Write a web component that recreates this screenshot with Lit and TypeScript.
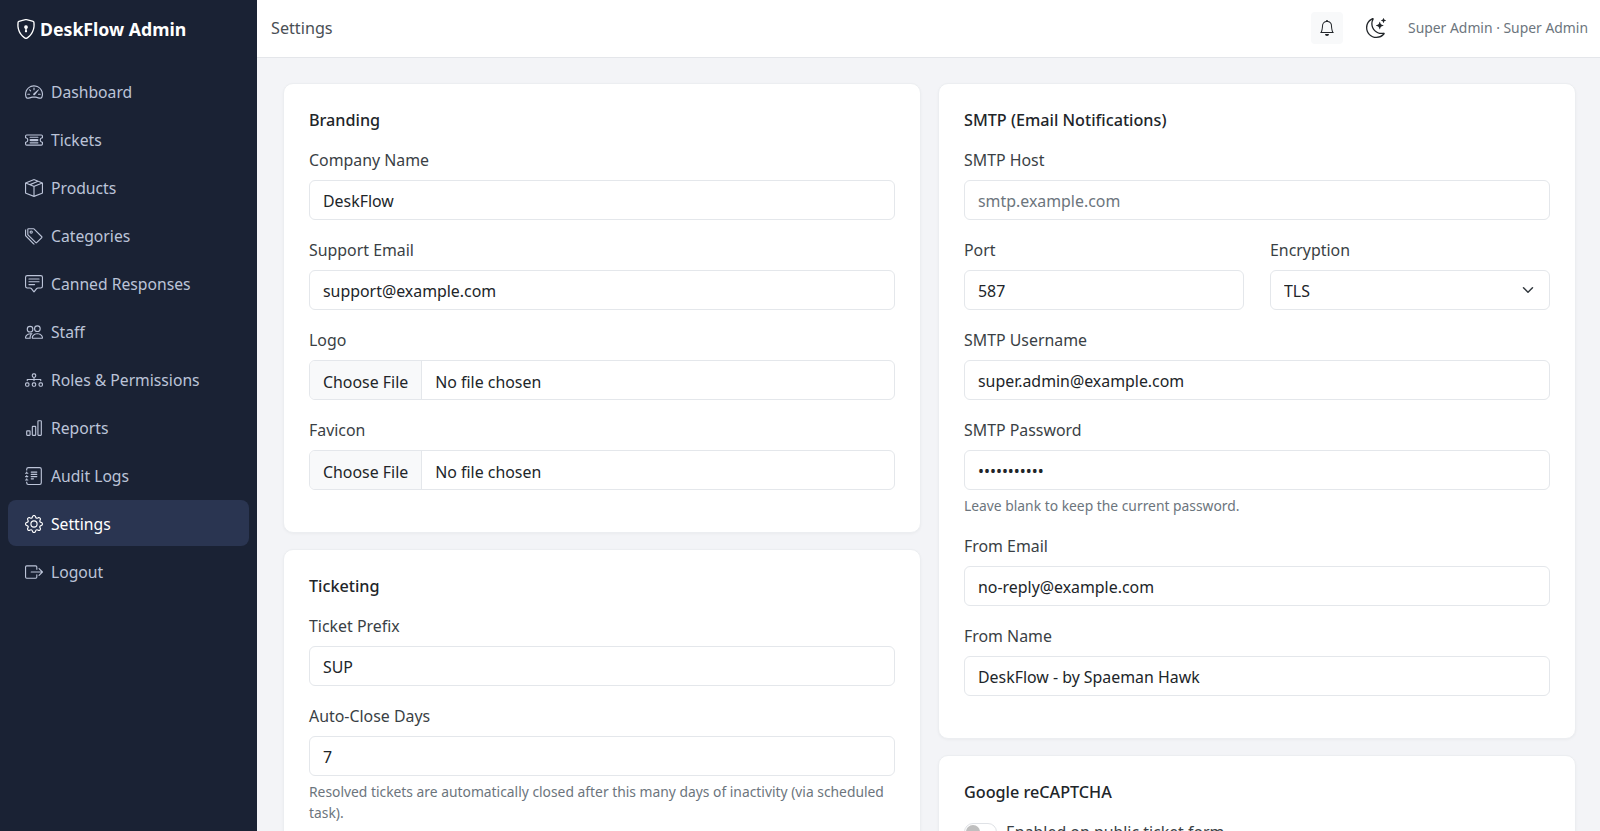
import { LitElement, html, css, svg } from 'lit';
import { customElement } from 'lit/decorators.js';

const icons: Record<string, unknown> = {
  shield: svg`<path d="M5.338 1.59a61.44 61.44 0 0 0-2.837.856.481.481 0 0 0-.328.39c-.554 4.157.726 7.19 2.253 9.188a10.725 10.725 0 0 0 2.287 2.233c.346.244.652.42.893.533.12.057.218.095.293.118a.55.55 0 0 0 .101.025.615.615 0 0 0 .1-.025c.076-.023.174-.061.294-.118.24-.113.547-.29.893-.533a10.726 10.726 0 0 0 2.287-2.233c1.527-1.997 2.807-5.031 2.253-9.188a.48.48 0 0 0-.328-.39c-.651-.213-1.75-.56-2.837-.855C9.552 1.29 8.531 1.067 8 1.067c-.53 0-1.552.223-2.662.524zM5.072.56C6.157.265 7.31 0 8 0s1.843.265 2.928.56c1.11.3 2.229.655 2.887.87a1.54 1.54 0 0 1 1.044 1.262c.596 4.477-.787 7.795-2.465 9.99a11.775 11.775 0 0 1-2.517 2.453 7.159 7.159 0 0 1-1.048.625c-.28.132-.581.24-.829.24s-.548-.108-.829-.24a7.158 7.158 0 0 1-1.048-.625 11.777 11.777 0 0 1-2.517-2.453C1.928 10.487.545 7.169 1.141 2.692A1.54 1.54 0 0 1 2.185 1.43 62.456 62.456 0 0 1 5.072.56z"/><path d="M9.5 6.5a1.5 1.5 0 0 1-1 1.415l.385 1.99a.5.5 0 0 1-.491.595h-.788a.5.5 0 0 1-.49-.595l.384-1.99a1.5 1.5 0 1 1 2-1.415z"/>`,
  speedometer: svg`<path d="M8 4a.5.5 0 0 1 .5.5V6a.5.5 0 0 1-1 0V4.5A.5.5 0 0 1 8 4zM3.732 5.732a.5.5 0 0 1 .707 0l.915.914a.5.5 0 1 1-.708.708l-.914-.915a.5.5 0 0 1 0-.707zM2 10a.5.5 0 0 1 .5-.5h1.586a.5.5 0 0 1 0 1H2.5A.5.5 0 0 1 2 10zm9.5 0a.5.5 0 0 1 .5-.5h1.5a.5.5 0 0 1 0 1H12a.5.5 0 0 1-.5-.5zm.754-4.246a.389.389 0 0 0-.527-.02L7.547 9.31a.91.91 0 1 0 1.302 1.258l3.434-4.297a.389.389 0 0 0-.029-.518z"/><path d="M0 10a8 8 0 1 1 15.547 2.661c-.442 1.253-1.845 1.602-2.932 1.25C11.309 13.488 9.475 13 8 13c-1.474 0-3.31.488-4.615.911-1.087.352-2.49.003-2.932-1.25A7.988 7.988 0 0 1 0 10zm8-7a7 7 0 0 0-6.603 9.329c.203.575.923.876 1.68.63C4.397 12.533 6.358 12 8 12s3.604.532 4.923.96c.757.245 1.477-.056 1.68-.631A7 7 0 0 0 8 3z"/>`,
  ticket: svg`<path d="M4 5.5a.5.5 0 0 1 .5-.5h7a.5.5 0 0 1 0 1h-7a.5.5 0 0 1-.5-.5Zm0 5a.5.5 0 0 1 .5-.5h7a.5.5 0 0 1 0 1h-7a.5.5 0 0 1-.5-.5ZM5 7a1 1 0 0 0 0 2h6a1 1 0 1 0 0-2H5Z"/><path d="M0 4.5A1.5 1.5 0 0 1 1.5 3h13A1.5 1.5 0 0 1 16 4.5V6a.5.5 0 0 1-.5.5 1.5 1.5 0 0 0 0 3 .5.5 0 0 1 .5.5v1.5a1.5 1.5 0 0 1-1.5 1.5h-13A1.5 1.5 0 0 1 0 11.5V10a.5.5 0 0 1 .5-.5 1.5 1.5 0 1 0 0-3A.5.5 0 0 1 0 6V4.5ZM1.5 4a.5.5 0 0 0-.5.5v1.05a2.5 2.5 0 0 1 0 4.9v1.05a.5.5 0 0 0 .5.5h13a.5.5 0 0 0 .5-.5v-1.05a2.5 2.5 0 0 1 0-4.9V4.5a.5.5 0 0 0-.5-.5h-13Z"/>`,
  box: svg`<path d="M8.186 1.113a.5.5 0 0 0-.372 0L1.846 3.5l2.404.961L10.404 2l-2.218-.887zm3.564 1.426L5.596 5 8 5.961 14.154 3.5l-2.404-.961zm3.25 1.7-6.5 2.6v7.922l6.5-2.6V4.24zM7.5 14.762V6.838L1 4.239v7.925l6.5 2.6zM7.443.184a1.5 1.5 0 0 1 1.114 0l7.129 2.852A.5.5 0 0 1 16 3.5v8.662a1 1 0 0 1-.629.928l-7.185 2.874a.5.5 0 0 1-.372 0L.63 13.09a1 1 0 0 1-.63-.928V3.5a.5.5 0 0 1 .314-.464L7.443.184z"/>`,
  tags: svg`<path d="M3 2v4.586l7 7L14.586 9l-7-7H3zM2 2a1 1 0 0 1 1-1h4.586a1 1 0 0 1 .707.293l7 7a1 1 0 0 1 0 1.414l-4.586 4.586a1 1 0 0 1-1.414 0l-7-7A1 1 0 0 1 2 6.586V2z"/><path d="M5.5 5a.5.5 0 1 1 0-1 .5.5 0 0 1 0 1zm0 1a1.5 1.5 0 1 0 0-3 1.5 1.5 0 0 0 0 3zM1 7.086a1 1 0 0 0 .293.707L8.75 15.25l-.043.043a1 1 0 0 1-1.414 0l-7-7A1 1 0 0 1 0 7.586V3a1 1 0 0 1 1-1v5.086z"/>`,
  chat: svg`<path d="M14 1a1 1 0 0 1 1 1v8a1 1 0 0 1-1 1h-2.5a2 2 0 0 0-1.6.8L8 14.333 6.1 11.8a2 2 0 0 0-1.6-.8H2a1 1 0 0 1-1-1V2a1 1 0 0 1 1-1h12zM2 0a2 2 0 0 0-2 2v8a2 2 0 0 0 2 2h2.5a1 1 0 0 1 .8.4l1.9 2.533a1 1 0 0 0 1.6 0l1.9-2.533a1 1 0 0 1 .8-.4H14a2 2 0 0 0 2-2V2a2 2 0 0 0-2-2H2z"/><path d="M3 3.5a.5.5 0 0 1 .5-.5h9a.5.5 0 0 1 0 1h-9a.5.5 0 0 1-.5-.5zM3 6a.5.5 0 0 1 .5-.5h9a.5.5 0 0 1 0 1h-9A.5.5 0 0 1 3 6zm0 2.5a.5.5 0 0 1 .5-.5h5a.5.5 0 0 1 0 1h-5a.5.5 0 0 1-.5-.5z"/>`,
  people: svg`<path d="M15 14s1 0 1-1-1-4-5-4-5 3-5 4 1 1 1 1h8Zm-7.978-1A.261.261 0 0 1 7 12.996c.001-.264.167-1.03.76-1.72C8.312 10.629 9.282 10 11 10c1.717 0 2.687.63 3.24 1.276.593.69.758 1.457.76 1.72l-.008.002a.274.274 0 0 1-.014.002H7.022ZM11 7a2 2 0 1 0 0-4 2 2 0 0 0 0 4Zm3-2a3 3 0 1 1-6 0 3 3 0 0 1 6 0ZM6.936 9.28a5.88 5.88 0 0 0-1.23-.247A7.35 7.35 0 0 0 5 9c-4 0-5 3-5 4 0 .667.333 1 1 1h4.216A2.238 2.238 0 0 1 5 13c0-1.01.377-2.042 1.09-2.904.243-.294.526-.569.846-.816ZM4.92 10A5.493 5.493 0 0 0 4 13H1c0-.26.164-1.03.76-1.724.545-.636 1.492-1.256 3.16-1.275ZM1.5 5.5a3 3 0 1 1 6 0 3 3 0 0 1-6 0Zm3-2a2 2 0 1 0 0 4 2 2 0 0 0 0-4Z"/>`,
  diagram: svg`<path fill-rule="evenodd" d="M6 3.5A1.5 1.5 0 0 1 7.5 2h1A1.5 1.5 0 0 1 10 3.5v1A1.5 1.5 0 0 1 8.5 6v1H14a.5.5 0 0 1 .5.5v1a.5.5 0 0 1-1 0V8h-5v.5a.5.5 0 0 1-1 0V8h-5v.5a.5.5 0 0 1-1 0v-1A.5.5 0 0 1 2 7h5.5V6A1.5 1.5 0 0 1 6 4.5v-1zM8.5 5a.5.5 0 0 0 .5-.5v-1a.5.5 0 0 0-.5-.5h-1a.5.5 0 0 0-.5.5v1a.5.5 0 0 0 .5.5h1zM0 11.5A1.5 1.5 0 0 1 1.5 10h1A1.5 1.5 0 0 1 4 11.5v1A1.5 1.5 0 0 1 2.5 14h-1A1.5 1.5 0 0 1 0 12.5v-1zm1.5-.5a.5.5 0 0 0-.5.5v1a.5.5 0 0 0 .5.5h1a.5.5 0 0 0 .5-.5v-1a.5.5 0 0 0-.5-.5h-1zm4.5.5A1.5 1.5 0 0 1 7.5 10h1a1.5 1.5 0 0 1 1.5 1.5v1A1.5 1.5 0 0 1 8.5 14h-1A1.5 1.5 0 0 1 6 12.5v-1zm1.5-.5a.5.5 0 0 0-.5.5v1a.5.5 0 0 0 .5.5h1a.5.5 0 0 0 .5-.5v-1a.5.5 0 0 0-.5-.5h-1zm4.5.5a1.5 1.5 0 0 1 1.5-1.5h1a1.5 1.5 0 0 1 1.5 1.5v1a1.5 1.5 0 0 1-1.5 1.5h-1a1.5 1.5 0 0 1-1.5-1.5v-1zm1.5-.5a.5.5 0 0 0-.5.5v1a.5.5 0 0 0 .5.5h1a.5.5 0 0 0 .5-.5v-1a.5.5 0 0 0-.5-.5h-1z"/>`,
  chart: svg`<path d="M4 11H2v3h2v-3zm5-4H7v7h2V7zm5-5v12h-2V2h2zm-2-1a1 1 0 0 0-1 1v12a1 1 0 0 0 1 1h2a1 1 0 0 0 1-1V2a1 1 0 0 0-1-1h-2zM6 7a1 1 0 0 1 1-1h2a1 1 0 0 1 1 1v7a1 1 0 0 1-1 1H7a1 1 0 0 1-1-1V7zm-5 4a1 1 0 0 1 1-1h2a1 1 0 0 1 1 1v3a1 1 0 0 1-1 1H2a1 1 0 0 1-1-1v-3z"/>`,
  journal: svg`<path d="M5 10.5a.5.5 0 0 1 .5-.5h2a.5.5 0 0 1 0 1h-2a.5.5 0 0 1-.5-.5zm0-2a.5.5 0 0 1 .5-.5h5a.5.5 0 0 1 0 1h-5a.5.5 0 0 1-.5-.5zm0-2a.5.5 0 0 1 .5-.5h5a.5.5 0 0 1 0 1h-5a.5.5 0 0 1-.5-.5zm0-2a.5.5 0 0 1 .5-.5h5a.5.5 0 0 1 0 1h-5a.5.5 0 0 1-.5-.5z"/><path d="M3 0h10a2 2 0 0 1 2 2v12a2 2 0 0 1-2 2H3a2 2 0 0 1-2-2v-1h1v1a1 1 0 0 0 1 1h10a1 1 0 0 0 1-1V2a1 1 0 0 0-1-1H3a1 1 0 0 0-1 1v1H1V2a2 2 0 0 1 2-2z"/><path d="M1 5v-.5a.5.5 0 0 1 1 0V5h.5a.5.5 0 0 1 0 1h-2a.5.5 0 0 1 0-1H1zm0 3v-.5a.5.5 0 0 1 1 0V8h.5a.5.5 0 0 1 0 1h-2a.5.5 0 0 1 0-1H1zm0 3v-.5a.5.5 0 0 1 1 0v.5h.5a.5.5 0 0 1 0 1h-2a.5.5 0 0 1 0-1H1z"/>`,
  gear: svg`<path d="M8 4.754a3.246 3.246 0 1 0 0 6.492 3.246 3.246 0 0 0 0-6.492zM5.754 8a2.246 2.246 0 1 1 4.492 0 2.246 2.246 0 0 1-4.492 0z"/><path d="M9.796 1.343c-.527-1.79-3.065-1.79-3.592 0l-.094.319a.873.873 0 0 1-1.255.52l-.292-.16c-1.64-.892-3.433.902-2.54 2.541l.159.292a.873.873 0 0 1-.52 1.255l-.319.094c-1.79.527-1.79 3.065 0 3.592l.319.094a.873.873 0 0 1 .52 1.255l-.16.292c-.892 1.64.901 3.434 2.541 2.54l.292-.159a.873.873 0 0 1 1.255.52l.094.319c.527 1.79 3.065 1.79 3.592 0l.094-.319a.873.873 0 0 1 1.255-.52l.292.16c1.64.893 3.434-.902 2.54-2.541l-.159-.292a.873.873 0 0 1 .52-1.255l.319-.094c1.79-.527 1.79-3.065 0-3.592l-.319-.094a.873.873 0 0 1-.52-1.255l.16-.292c.893-1.64-.902-3.433-2.541-2.54l-.292.159a.873.873 0 0 1-1.255-.52l-.094-.319zm-2.633.283c.246-.835 1.428-.835 1.674 0l.094.319a1.873 1.873 0 0 0 2.693 1.115l.291-.16c.764-.415 1.6.42 1.184 1.185l-.159.292a1.873 1.873 0 0 0 1.116 2.692l.318.094c.835.246.835 1.428 0 1.674l-.319.094a1.873 1.873 0 0 0-1.115 2.693l.16.291c.415.764-.42 1.6-1.185 1.184l-.291-.159a1.873 1.873 0 0 0-2.693 1.116l-.094.318c-.246.835-1.428.835-1.674 0l-.094-.319a1.873 1.873 0 0 0-2.692-1.115l-.292.16c-.764.415-1.6-.42-1.184-1.185l.159-.291A1.873 1.873 0 0 0 1.945 8.93l-.319-.094c-.835-.246-.835-1.428 0-1.674l.319-.094A1.873 1.873 0 0 0 3.06 4.377l-.16-.292c-.415-.764.42-1.6 1.185-1.184l.292.159a1.873 1.873 0 0 0 2.692-1.115l.094-.319z"/>`,
  logout: svg`<path fill-rule="evenodd" d="M10 12.5a.5.5 0 0 1-.5.5h-8a.5.5 0 0 1-.5-.5v-9a.5.5 0 0 1 .5-.5h8a.5.5 0 0 1 .5.5v2a.5.5 0 0 0 1 0v-2A1.5 1.5 0 0 0 9.5 2h-8A1.5 1.5 0 0 0 0 3.5v9A1.5 1.5 0 0 0 1.5 14h8a1.5 1.5 0 0 0 1.5-1.5v-2a.5.5 0 0 0-1 0v2z"/><path fill-rule="evenodd" d="M15.854 8.354a.5.5 0 0 0 0-.708l-3-3a.5.5 0 0 0-.708.708L14.293 7.5H5.5a.5.5 0 0 0 0 1h8.793l-2.147 2.146a.5.5 0 0 0 .708.708l3-3z"/>`,
  bell: svg`<path d="M8 16a2 2 0 0 0 2-2H6a2 2 0 0 0 2 2zM8 1.918l-.797.161A4.002 4.002 0 0 0 4 6c0 .628-.134 2.197-.459 3.742-.16.767-.376 1.566-.663 2.258h10.244c-.287-.692-.502-1.49-.663-2.258C12.134 8.197 12 6.628 12 6a4.002 4.002 0 0 0-3.203-3.92L8 1.917zM14.22 12c.223.447.481.801.78 1H1c.299-.199.557-.553.78-1C2.68 10.2 3 6.88 3 6c0-2.42 1.72-4.44 4.005-4.901a1 1 0 1 1 1.99 0A5.002 5.002 0 0 1 13 6c0 .88.32 4.2 1.22 6z"/>`,
  moon: svg`<path d="M6 .278a.768.768 0 0 1 .08.858 7.208 7.208 0 0 0-.878 3.46c0 4.021 3.278 7.277 7.318 7.277.527 0 1.04-.055 1.533-.16a.787.787 0 0 1 .81.316.733.733 0 0 1-.031.893A8.349 8.349 0 0 1 8.344 16C3.734 16 0 12.286 0 7.71 0 4.266 2.114 1.312 5.124.06A.752.752 0 0 1 6 .278zM4.858 1.311A7.269 7.269 0 0 0 1.025 7.71c0 4.02 3.279 7.276 7.319 7.276a7.316 7.316 0 0 0 5.205-2.162c-.337.042-.68.063-1.029.063-4.61 0-8.343-3.714-8.343-8.29 0-1.167.242-2.278.681-3.286z"/><path d="M10.794 3.148a.217.217 0 0 1 .412 0l.387 1.162c.173.518.579.924 1.097 1.097l1.162.387a.217.217 0 0 1 0 .412l-1.162.387a1.734 1.734 0 0 0-1.097 1.097l-.387 1.162a.217.217 0 0 1-.412 0l-.387-1.162A1.734 1.734 0 0 0 9.31 6.593l-1.162-.387a.217.217 0 0 1 0-.412l1.162-.387a1.734 1.734 0 0 0 1.097-1.097l.387-1.162zM13.863.099a.145.145 0 0 1 .274 0l.258.774c.115.346.386.617.732.732l.774.258a.145.145 0 0 1 0 .274l-.774.258a1.156 1.156 0 0 0-.732.732l-.258.774a.145.145 0 0 1-.274 0l-.258-.774a1.156 1.156 0 0 0-.732-.732l-.774-.258a.145.145 0 0 1 0-.274l.774-.258c.346-.115.617-.386.732-.732L13.863.1z"/>`,
};

const NAV = [
  { label: 'Dashboard', icon: 'speedometer' },
  { label: 'Tickets', icon: 'ticket' },
  { label: 'Products', icon: 'box' },
  { label: 'Categories', icon: 'tags' },
  { label: 'Canned Responses', icon: 'chat' },
  { label: 'Staff', icon: 'people' },
  { label: 'Roles & Permissions', icon: 'diagram' },
  { label: 'Reports', icon: 'chart' },
  { label: 'Audit Logs', icon: 'journal' },
  { label: 'Settings', icon: 'gear', active: true },
  { label: 'Logout', icon: 'logout' },
];

const icon = (name: string) =>
  html`<svg class="bi" viewBox="0 0 16 16" fill="currentColor">${icons[name]}</svg>`;

@customElement('app-root')
export class AppRoot extends LitElement {
  static styles = css`
    :host {
      display: block;
      height: 831px;
      overflow: hidden;
      font-family: "Noto Sans", "Open Sans", sans-serif;
      font-size: 15.9px;
      line-height: 24px;
      color: #212529;
      background: #f3f4f7;
    }

    * {
      box-sizing: border-box;
    }

    .shell {
      display: flex;
      height: 831px;
    }

    .sidebar {
      flex: 0 0 257px;
      background: #1a2234;
      color: #bcc4d8;
      padding: 0 8px;
    }

    .brand {
      display: flex;
      align-items: center;
      gap: 4px;
      height: 57px;
      padding-left: 8px;
      color: #fff;
      font-size: 17.7px;
      font-weight: 700;
    }

    .brand .bi {
      width: 20px;
      height: 20px;
    }

    .nav {
      display: flex;
      flex-direction: column;
      gap: 2px;
      margin-top: 11px;
    }

    .nav-item {
      display: flex;
      align-items: center;
      gap: 8px;
      height: 46px;
      padding: 1px 17px 0;
      border-radius: 8px;
      font-size: 15.7px;
    }

    .nav-item .bi {
      width: 18px;
      height: 18px;
      flex: none;
    }

    .nav-item.active {
      background: #2a3551;
      color: #fff;
    }

    .content {
      flex: 1;
      min-width: 0;
    }

    .topbar {
      display: flex;
      align-items: center;
      height: 58px;
      padding: 0 12px 2px 14px;
      background: #fff;
      border-bottom: 1px solid #e4e6ea;
    }

    .page-title {
      flex: 1;
      color: #4a4f55;
      font-size: 16.2px;
    }

    .bell {
      display: flex;
      align-items: center;
      justify-content: center;
      width: 32px;
      height: 32px;
      margin-right: 1px;
      background: #f8f9fa;
      border: 0;
      border-radius: 4px;
      color: #212529;
      padding: 0;
    }

    .bell .bi {
      width: 16px;
      height: 16px;
    }

    .moon {
      display: flex;
      margin: 0 22px;
      color: #212529;
    }

    .moon .bi {
      width: 20px;
      height: 20px;
    }

    .user {
      color: #6c757d;
      font-size: 13.9px;
    }

    .columns {
      display: flex;
      gap: 17px;
      padding: 25px 24px 0 26px;
    }

    .col {
      flex: 1;
      min-width: 0;
      display: flex;
      flex-direction: column;
      gap: 16px;
    }

    .card {
      background: #fff;
      border: 1px solid #eceef1;
      border-radius: 10px;
      box-shadow: 0 1px 3px rgba(0, 0, 0, 0.04);
      padding: 24px 25px;
    }

    .card h2 {
      margin: 0 0 16px;
      font-size: 16.2px;
      font-weight: 500;
      line-height: 24px;
    }

    .field {
      margin-bottom: 18px;
    }

    .row {
      display: flex;
      gap: 26px;
    }

    .row .field {
      flex: 1;
      min-width: 0;
    }

    label {
      display: block;
      margin-bottom: 8px;
      color: #3a3f45;
    }

    .control {
      display: block;
      width: 100%;
      height: 40px;
      padding: 2px 13px 0;
      border: 1px solid #e4e7eb;
      border-radius: 6px;
      background: #fff;
      color: #212529;
      font: inherit;
      outline: none;
    }

    .control::placeholder {
      color: #6c757d;
    }

    select.control {
      appearance: none;
      background-image: url("data:image/svg+xml,%3csvg xmlns='http://www.w3.org/2000/svg' viewBox='0 0 16 16'%3e%3cpath fill='none' stroke='%23343a40' stroke-linecap='round' stroke-linejoin='round' stroke-width='2' d='m2 5 6 6 6-6'/%3e%3c/svg%3e");
      background-repeat: no-repeat;
      background-position: right 14px center;
      background-size: 14px 12px;
    }

    input[type='file'].control {
      padding: 0;
      line-height: 38px;
    }

    input[type='file'].control::file-selector-button {
      height: 38px;
      margin: 0 13px 0 0;
      padding: 2px 13px 0;
      border: 0;
      border-right: 1px solid #e4e7eb;
      border-radius: 0;
      background: #f8f9fa;
      color: #212529;
      font: inherit;
    }

    .help {
      margin-top: 5px;
      color: #6c757d;
      font-size: 13.85px;
      line-height: 21px;
    }

    .switch-row {
      display: flex;
      align-items: center;
      gap: 9px;
      color: #3a3f45;
    }

    .switch {
      flex: none;
      width: 33px;
      height: 18px;
      padding: 1px;
      border: 1px solid #dfe2e6;
      border-radius: 9px;
      background: #fff;
    }

    .switch::before {
      content: '';
      display: block;
      width: 14px;
      height: 14px;
      border-radius: 50%;
      background: #bfbfbf;
    }
  `;

  private field(name: string, value: string, type = 'text', placeholder = '') {
    return html`
      <div class="field">
        <label>${name}</label>
        <input class="control" type=${type} .value=${value} placeholder=${placeholder} />
      </div>
    `;
  }

  private fileField(name: string) {
    return html`
      <div class="field">
        <label>${name}</label>
        <input class="control" type="file" />
      </div>
    `;
  }

  render() {
    return html`
      <div class="shell">
        <aside class="sidebar">
          <div class="brand">${icon('shield')}<span>DeskFlow Admin</span></div>
          <nav class="nav">
            ${NAV.map(
              (item) => html`
                <div class="nav-item ${item.active ? 'active' : ''}">
                  ${icon(item.icon)}<span>${item.label}</span>
                </div>
              `
            )}
          </nav>
        </aside>
        <div class="content">
          <header class="topbar">
            <div class="page-title">Settings</div>
            <button class="bell">${icon('bell')}</button>
            <span class="moon">${icon('moon')}</span>
            <span class="user">Super Admin · Super Admin</span>
          </header>
          <main class="columns">
            <div class="col">
              <section class="card">
                <h2>Branding</h2>
                ${this.field('Company Name', 'DeskFlow')}
                ${this.field('Support Email', 'support@example.com')}
                ${this.fileField('Logo')}
                ${this.fileField('Favicon')}
              </section>
              <section class="card">
                <h2>Ticketing</h2>
                ${this.field('Ticket Prefix', 'SUP')}
                <div class="field">
                  <label>Auto-Close Days</label>
                  <input class="control" type="text" .value=${'7'} />
                  <div class="help">
                    Resolved tickets are automatically closed after this many days of inactivity (via scheduled task).
                  </div>
                </div>
              </section>
            </div>
            <div class="col">
              <section class="card">
                <h2>SMTP (Email Notifications)</h2>
                ${this.field('SMTP Host', '', 'text', 'smtp.example.com')}
                <div class="row">
                  ${this.field('Port', '587')}
                  <div class="field">
                    <label>Encryption</label>
                    <select class="control">
                      <option>TLS</option>
                    </select>
                  </div>
                </div>
                ${this.field('SMTP Username', 'super.admin@example.com')}
                <div class="field">
                  <label>SMTP Password</label>
                  <input class="control" type="password" .value=${'placeholder'} />
                  <div class="help">Leave blank to keep the current password.</div>
                </div>
                ${this.field('From Email', 'no-reply@example.com')}
                ${this.field('From Name', 'DeskFlow - by Spaeman Hawk')}
              </section>
              <section class="card">
                <h2>Google reCAPTCHA</h2>
                <div class="switch-row">
                  <span class="switch"></span>
                  <span>Enabled on public ticket form</span>
                </div>
              </section>
            </div>
          </main>
        </div>
      </div>
    `;
  }
}
